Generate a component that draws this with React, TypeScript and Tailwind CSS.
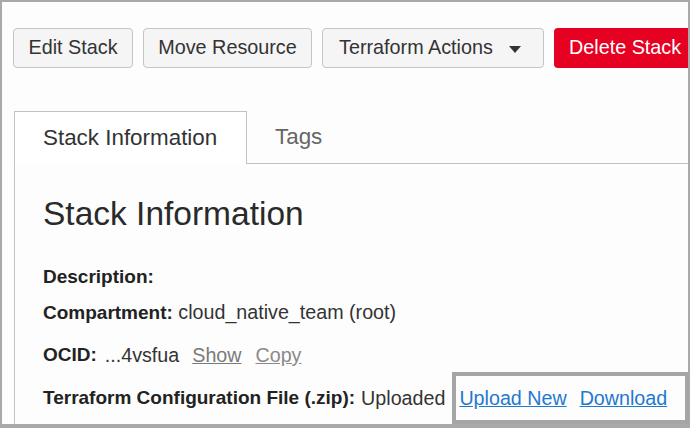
import React from 'react';

function ToolbarButton({ label, width }: { label: string; width: string }) {
  return (
    <button
      className={`flex h-[40px] shrink-0 items-center justify-center rounded-[4px] border border-[#c4c4c4] bg-[#f5f5f5] text-[19.8px] text-[#333333] ${width}`}
    >
      {label}
    </button>
  );
}

export default function App() {
  return (
    <div className="relative h-[428px] w-[691px] overflow-hidden bg-white font-['Liberation_Sans',Arial,sans-serif]">
      <div className="h-[428px] w-[690px] overflow-hidden border-2 border-b-4 border-[#a9a9a9] bg-[#fdfdfd]">
        {/* Actions */}
        <div className="flex gap-[10px] pl-[11px] pt-[26px]">
          <ToolbarButton label="Edit Stack" width="w-[120px]" />
          <ToolbarButton label="Move Resource" width="w-[169px]" />
          <button className="flex h-[40px] w-[222px] shrink-0 items-center gap-4 rounded-[4px] border border-[#c4c4c4] bg-[#f5f5f5] pl-[16px] text-[19.8px] text-[#333333]">
            Terraform Actions
            <svg width="12" height="7" viewBox="0 0 12 7" className="mt-[2px]">
              <path d="M0 0 L12 0 L6 7 Z" fill="#333333" />
            </svg>
          </button>
          <button className="flex h-[40px] w-[150px] shrink-0 items-center rounded-[4px] bg-[#e60022] pl-[15px] text-[19.8px] text-white">
            Delete Stack
          </button>
        </div>

        {/* Tabs */}
        <div className="ml-[12px] mt-[43px] flex h-[53px]">
          <div className="flex w-[233px] items-center border-x border-t border-[#c2c2c2] bg-white pl-[28px] pb-[1px] text-[22.4px] text-[#333333]">
            Stack Information
          </div>
          <div className="flex items-center border-b border-[#c2c2c2] px-[28px] text-[22.4px] text-[#666666]">Tags</div>
          <div className="flex-1 border-b border-[#c2c2c2]" />
        </div>

        {/* Panel */}
        <div className="ml-[12px] h-[300px] border-l border-[#c2c2c2] pl-[28px] text-[19.7px] leading-[22px] text-[#333333]">
          <h1 className="pt-[31px] text-[33.5px] leading-[38px] text-[#2a2a2a]">Stack Information</h1>
          <div className="mt-[33px] text-[19px] font-bold text-[#222222]">Description:</div>
          <div className="mt-[13px]">
            <span className="text-[19px] font-bold text-[#222222]">Compartment:</span> cloud_native_team (root)
          </div>
          <div className="mt-[20px] flex">
            <span className="text-[19px] font-bold text-[#222222]">OCID:</span>
            <span className="ml-[8px]">...4vsfua</span>
            <a className="ml-[13px] text-[#7a7a7a] underline">Show</a>
            <a className="ml-[14px] text-[#8a8a8a] underline">Copy</a>
          </div>
          <div className="mt-[21px] flex whitespace-nowrap">
            <span className="text-[19px] font-bold text-[#222222]">Terraform Configuration File (.zip):</span>
            <span className="ml-[6px]">Uploaded</span>
            <a className="ml-[14px] text-[#1f78d1] underline">Upload New</a>
            <a className="ml-[13px] text-[#1f78d1] underline">Download</a>
          </div>
        </div>
      </div>

      {/* Highlight annotation */}
      <div className="absolute left-[452px] top-[372px] h-[52px] w-[237px] border-4 border-[#a5a5a5]" />
    </div>
  );
}
